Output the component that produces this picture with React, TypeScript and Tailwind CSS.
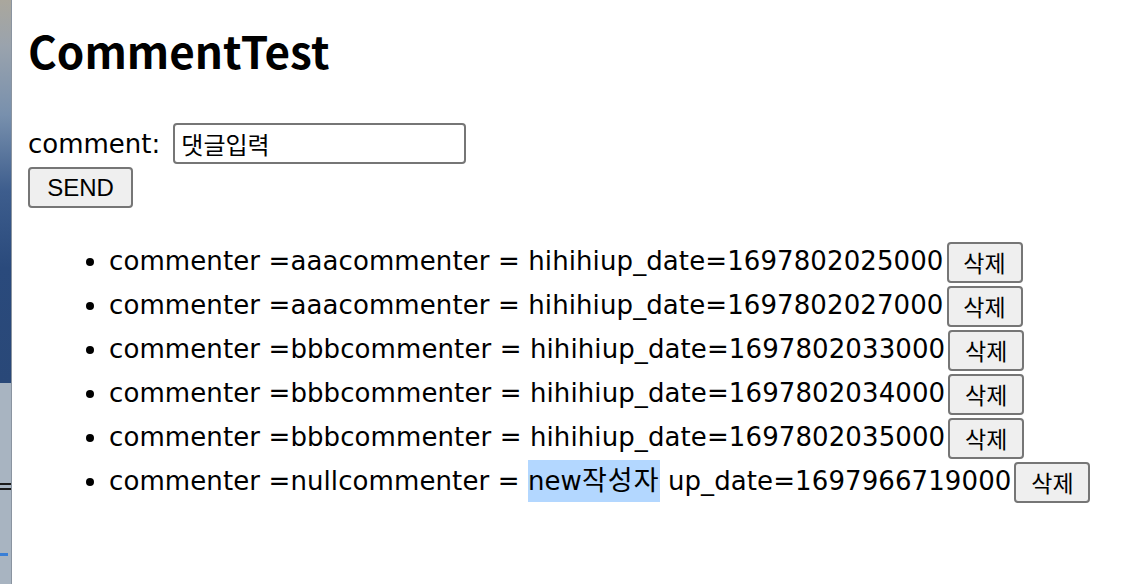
import { useState } from "react"

type Comment = {
  commenter: string
  comment: string
  up_date: number
}

const initialComments: Comment[] = [
  { commenter: "aaa", comment: "hihihi", up_date: 1697802025000 },
  { commenter: "aaa", comment: "hihihi", up_date: 1697802027000 },
  { commenter: "bbb", comment: "hihihi", up_date: 1697802033000 },
  { commenter: "bbb", comment: "hihihi", up_date: 1697802034000 },
  { commenter: "bbb", comment: "hihihi", up_date: 1697802035000 },
  { commenter: "null", comment: "new작성자", up_date: 1697966719000 },
]

function DesktopEdge() {
  return (
    <div className="flex w-[12px] shrink-0 flex-col border-r border-[#8a94a0]">
      <div className="h-[383px] bg-[linear-gradient(180deg,#aaa79d_0%,#9aa3ad_12%,#7890ad_30%,#3d5d8d_50%,#2a4a7c_70%,#294878_100%)]" />
      <div className="flex flex-1 flex-col bg-[#a8b4c1]">
        <div className="mt-[100px] h-[2px] bg-[#1a1a1a]" />
        <div className="mt-[3px] h-[2px] bg-[#1a1a1a]" />
        <div className="mt-[63px] h-[3px] w-[8px] bg-[#3a7fd6]" />
      </div>
    </div>
  )
}

export default function App() {
  const [comments, setComments] = useState(initialComments)
  const [text, setText] = useState("댓글입력")

  return (
    <div className="flex min-h-[584px] bg-white font-['DejaVu_Sans','Noto_Sans_CJK_KR',sans-serif] text-black">
      <DesktopEdge />
      <div className="flex-1 pl-[16px]">
        <h1 className="mt-[22px] font-['Noto_Sans_CJK_KR',sans-serif] text-[44px] font-bold leading-[56px]">
          CommentTest
        </h1>

        <form className="mt-[45px]" onSubmit={(e) => e.preventDefault()}>
          <label className="flex items-center text-[26px] leading-[40px]">
            comment:
            <input
              className="ml-[13px] h-[41px] w-[293px] rounded-[4px] border-2 border-[#767676] px-[6px] font-['Noto_Sans_CJK_KR',sans-serif] text-[24px] outline-none"
              value={text}
              onChange={(e) => setText(e.target.value)}
            />
          </label>
          <button
            type="submit"
            className="mt-[3px] h-[41px] w-[105px] rounded-[4px] border-2 border-[#767676] bg-[#efefef] font-['Liberation_Sans',sans-serif] text-[24px]"
          >
            SEND
          </button>
        </form>

        <ul className="mt-[31px] list-disc pl-[81px] text-[26px] tracking-[0.1px]">
          {comments.map((c, i) => (
            <li key={i} className="h-[44px] leading-[44px]">
              commenter ={c.commenter}commenter ={" "}
              {c.commenter === "null" ? (
                <>
                  <span className="bg-[#b3d7ff] py-[6px]">
                    new<span className="text-[27px] tracking-[1px]">작성자</span>
                  </span>{" "}
                </>
              ) : (
                c.comment
              )}
              up_date={c.up_date}
              <button
                className="ml-[3px] h-[41px] w-[76px] rounded-[4px] border-2 border-[#767676] bg-[#efefef] align-middle font-['Noto_Sans_CJK_KR',sans-serif] text-[23px] leading-[1] tracking-normal"
                onClick={() => setComments(comments.filter((_, j) => j !== i))}
              >
                삭제
              </button>
            </li>
          ))}
        </ul>
      </div>
    </div>
  )
}
